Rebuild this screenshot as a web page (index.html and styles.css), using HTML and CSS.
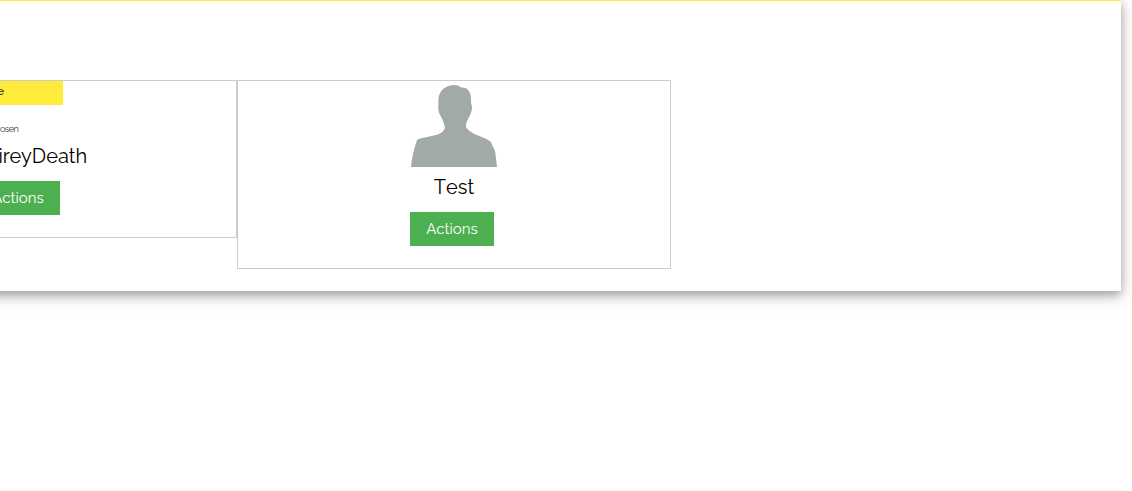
FILE: index.html
```
<!DOCTYPE html>
<html lang="en">
<head>
<meta charset="utf-8">
<title>Players</title>
<link rel="stylesheet" href="styles.css">
</head>
<body>
<main class="panel">
  <div class="players">
    <section class="player player-clipped">
      <div class="banner"><span class="banner-title">e</span></div>
      <p class="caption">osen</p>
      <h2 class="name"><span class="name-text name-long">ireyDeath</span></h2>
      <button class="actions"><span class="label">Actions</span></button>
    </section>
    <section class="player player-full">
      <svg class="avatar" width="86" height="86" viewBox="0 0 86 86">
        <path fill="#a1aaa8" d="M0 86C1 75 4 65 6 59Q7 58 9 57.500C18 55 29 55 33 49Q34.500 47 33.500 44.500Q32.500 41 31 37.500Q28 33 27.300 29V20C27.300 10 34 4 44 4Q48 4 50 6.500C57 6 60 11 60 18V22Q62 26 60.500 30Q59.500 34 57.500 37Q56 40 55 43.500Q54.500 46 56 47.500Q58 50 61 51.500C66 55 74 56 80 61Q81 63 81.500 65Q84 68 84.500 73L86 86Z"/>
      </svg>
      <h2 class="name"><span class="name-text name-short">Test</span></h2>
      <button class="actions"><span class="label">Actions</span></button>
    </section>
  </div>
</main>
</body>
</html>
```
FILE: styles.css
```
* { box-sizing: border-box; }
html, body { margin: 0; height: 100%; overflow: hidden; background: #fff; }
body { font-family: Raleway, Lato, sans-serif; font-size: 15px; color: #000; }
.panel {
  width: 1621px;
  height: 291px;
  margin-left: -500px;
  padding: 79px 0 0 500px;
  border-top: 1px solid #ffeb3b;
  background: #fff;
  box-shadow: 0 4px 8px 0 rgba(0,0,0,.25), 0 4px 18px 0 rgba(0,0,0,.2);
}
.players { display: flex; align-items: flex-start; }
.player { border: 1px solid #ccc; display: flex; flex-direction: column; }
.player-clipped { width: 237px; height: 158px; border-left: 0; align-items: flex-start; overflow: hidden; }
.player-full { width: 434px; height: 189px; align-items: center; }
.banner { width: 63px; height: 24px; background: #ffeb3b; line-height: 21px; }
.banner-title { display: block; margin-left: -2.5px; font-size: 11px; font-weight: 600; color: #4b4620; }
.caption { margin: 18px 0 0; height: 13px; line-height: 12px; font-size: 9px; letter-spacing: -.5px; color: #333; }
.avatar { display: block; }
.name { margin: 0; height: 45px; font-size: 20px; font-weight: 400; line-height: 40px; white-space: nowrap; }
.name-text { display: block; }
.name-long { margin-left: -1.5px; }
.name-short { font-kerning: none; }
.actions {
  width: 84px; height: 34px; padding: 0; border: 0;
  background: #4caf50; color: #fff; font: inherit; line-height: 34px;
  text-align: center;
}
.player-clipped .actions { margin-left: -24px; }
.player-full .actions { margin-right: 4px; }
```
